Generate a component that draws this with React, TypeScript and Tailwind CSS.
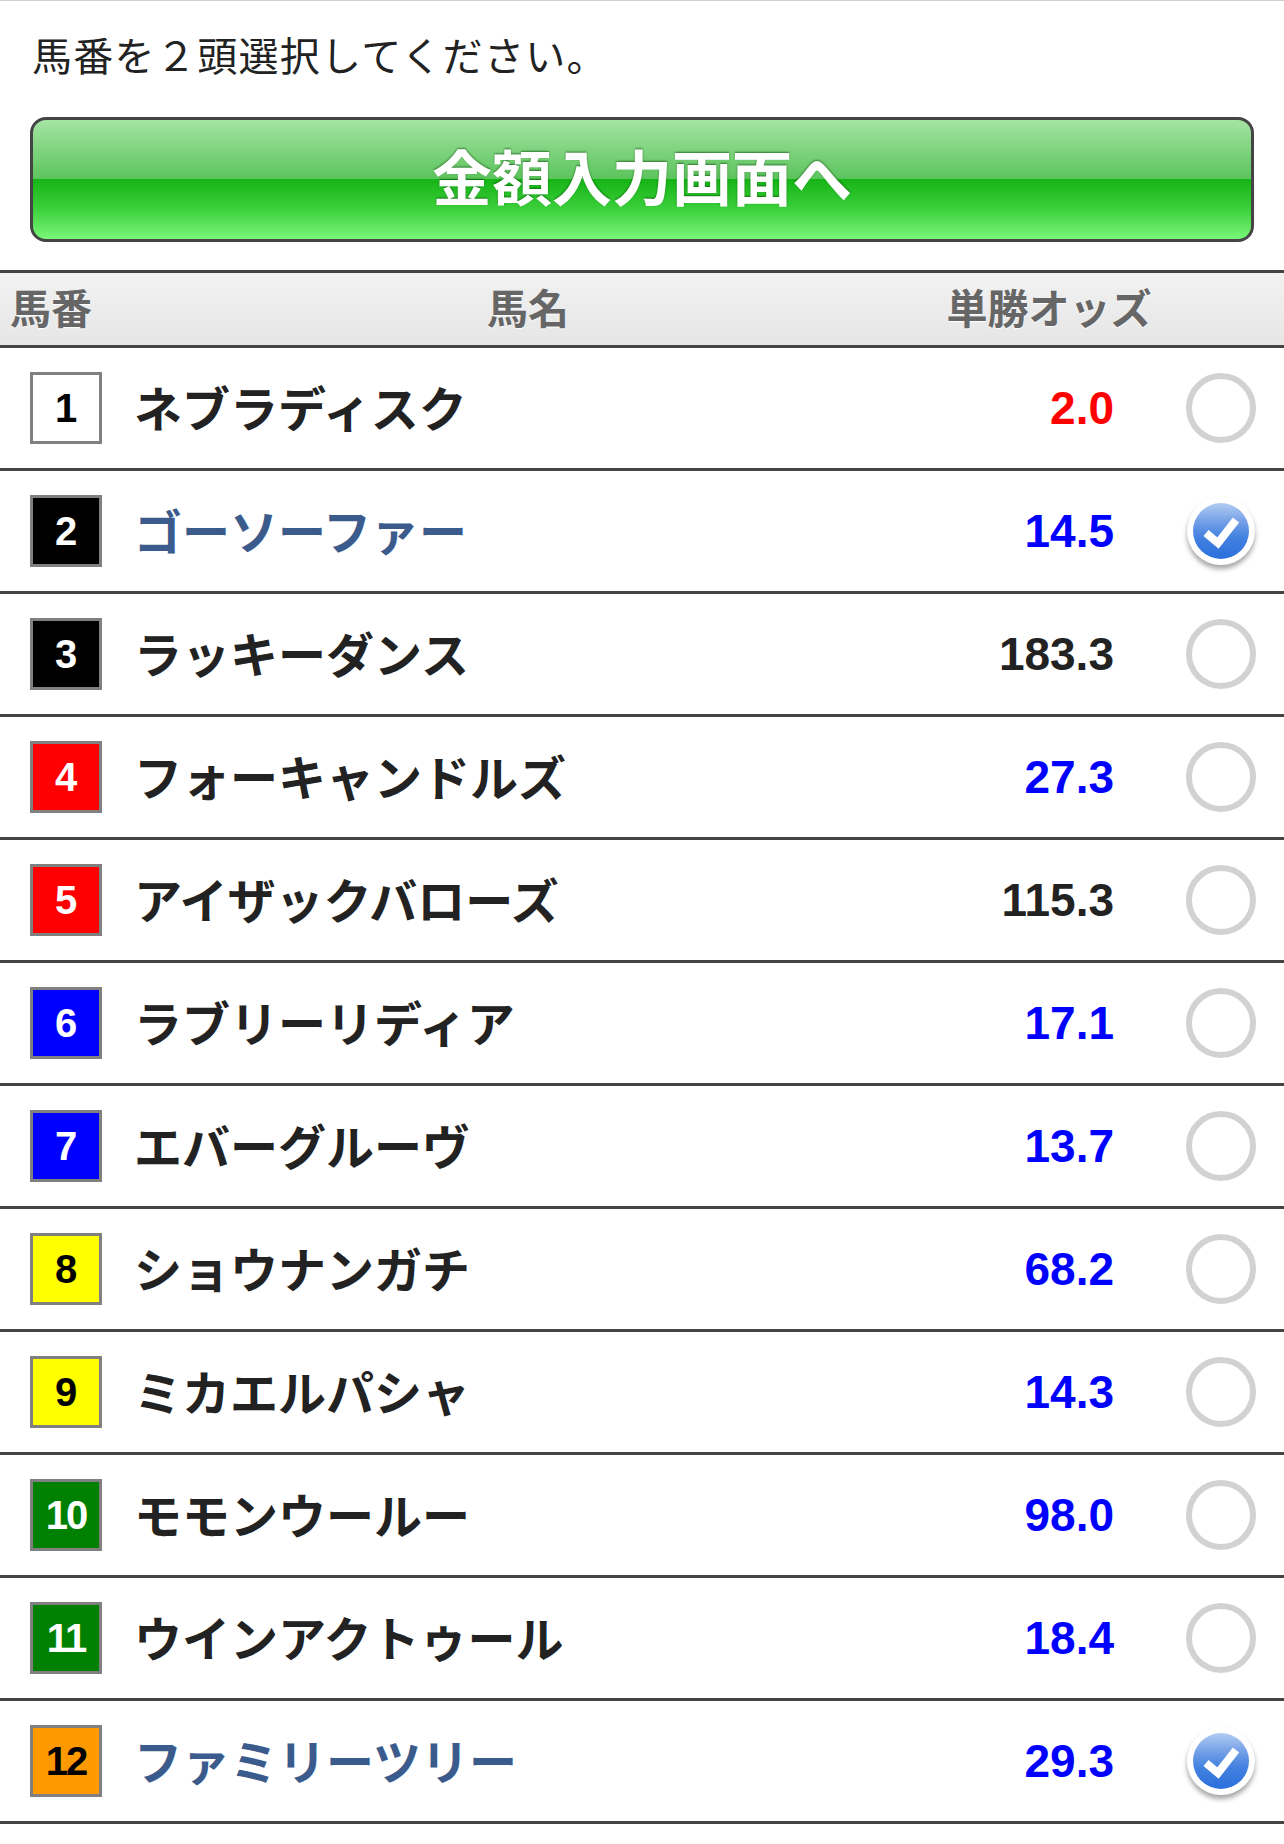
import { FC } from "react";

type Horse = {
  no: number;
  name: string;
  odds: string;
  box: string;
  oddsColor: string;
  selected?: boolean;
};

const horses: Horse[] = [
  { no: 1, name: "ネブラディスク", odds: "2.0", box: "bg-white text-black", oddsColor: "text-[#ff0000]" },
  { no: 2, name: "ゴーソーファー", odds: "14.5", box: "bg-black text-white", oddsColor: "text-[#0000ff]", selected: true },
  { no: 3, name: "ラッキーダンス", odds: "183.3", box: "bg-black text-white", oddsColor: "text-[#222222]" },
  { no: 4, name: "フォーキャンドルズ", odds: "27.3", box: "bg-[#ff0000] text-white", oddsColor: "text-[#0000ff]" },
  { no: 5, name: "アイザックバローズ", odds: "115.3", box: "bg-[#ff0000] text-white", oddsColor: "text-[#222222]" },
  { no: 6, name: "ラブリーリディア", odds: "17.1", box: "bg-[#0000ff] text-white", oddsColor: "text-[#0000ff]" },
  { no: 7, name: "エバーグルーヴ", odds: "13.7", box: "bg-[#0000ff] text-white", oddsColor: "text-[#0000ff]" },
  { no: 8, name: "ショウナンガチ", odds: "68.2", box: "bg-[#ffff00] text-black", oddsColor: "text-[#0000ff]" },
  { no: 9, name: "ミカエルパシャ", odds: "14.3", box: "bg-[#ffff00] text-black", oddsColor: "text-[#0000ff]" },
  { no: 10, name: "モモンウールー", odds: "98.0", box: "bg-[#008000] text-white", oddsColor: "text-[#0000ff]" },
  { no: 11, name: "ウインアクトゥール", odds: "18.4", box: "bg-[#008000] text-white", oddsColor: "text-[#0000ff]" },
  { no: 12, name: "ファミリーツリー", odds: "29.3", box: "bg-[#ff9900] text-black", oddsColor: "text-[#0000ff]", selected: true },
];

const jp = "font-['Noto_Sans_CJK_JP',sans-serif]";
const num = "font-['Liberation_Sans','Noto_Sans_CJK_JP',sans-serif]";

const Radio: FC<{ checked?: boolean }> = ({ checked }) => {
  if (!checked) {
    return <div className="w-[70px] h-[70px] rounded-full border-[6px] border-[#d2d2d2]" />;
  }
  return (
    <div className="w-[68px] h-[68px] rounded-full bg-white flex items-center justify-center shadow-[0_4px_5px_rgba(0,0,0,0.35)]">
      <div className="w-[56px] h-[56px] rounded-full bg-[linear-gradient(to_bottom,#b3cdf2_0%,#7aa4e8_30%,#4582e0_60%,#2a6fdc_100%)] flex items-center justify-center">
        <svg width="56" height="56" viewBox="0 0 56 56">
          <polyline
            points="13,30 25,40 43,17"
            fill="none"
            stroke="white"
            strokeWidth="8"
            strokeLinejoin="miter"
          />
        </svg>
      </div>
    </div>
  );
};

const Row: FC<{ horse: Horse }> = ({ horse }) => {
  return (
    <div className="flex items-center h-[123px] border-b-[3px] border-[#444444] pl-[30px] pr-[28px]">
      <div
        className={`w-[72px] h-[72px] shrink-0 border-[3px] border-[#808080] flex items-center justify-center ${num} font-bold text-[40px] leading-none ${
          horse.no >= 10 ? "tracking-[-2px]" : ""
        } ${horse.box}`}
      >
        {horse.no}
      </div>
      <div
        className={`ml-[32px] pb-[5px] flex-1 ${jp} font-bold text-[48px] leading-none ${
          horse.selected ? "text-[#3b5b8c]" : "text-[#222222]"
        }`}
      >
        {horse.name}
      </div>
      <div className={`${num} font-bold text-[46px] leading-none ${horse.oddsColor}`}>{horse.odds}</div>
      <div className="ml-[72px] w-[70px] flex items-center justify-center">
        <Radio checked={horse.selected} />
      </div>
    </div>
  );
};

export default function App() {
  return (
    <div className="w-[1284px] min-h-[1844px] bg-white border-t border-[#d0d0d0]">
      {/* instruction */}
      <div className={`pt-[33px] pb-[2px] pl-[32px] ${jp} text-[40px] leading-[40px] tracking-[1.3px] text-[#222222]`}>
        馬番を２頭選択してください。
      </div>

      {/* amount button */}
      <div className="mt-[41px] mx-[30px] h-[125px] pb-[10px] rounded-[16px] border-[3px] border-[#444444] bg-[linear-gradient(to_bottom,#a4e4a4_0%,#5cc45c_49.5%,#16b416_50%,#3cd03c_75%,#7af77a_100%)] flex items-center justify-center">
        <span
          className={`${jp} font-bold text-[60px] leading-none text-white [text-shadow:0_-1px_2px_rgba(0,60,0,0.6)]`}
        >
          金額入力画面へ
        </span>
      </div>

      {/* table header */}
      <div
        className={`mt-[28px] h-[78px] pb-[5px] border-y-[3px] border-[#444444] bg-[linear-gradient(to_bottom,#f2f2f2,#e6e6e6)] flex items-center ${jp} font-bold text-[41px] leading-none text-[#666666] [text-shadow:0_1px_1px_#ffffff]`}
      >
        <div className="w-[118px] pl-[10px]">馬番</div>
        <div className="w-[820px] text-center">馬名</div>
        <div className="w-[222px] text-center">単勝オッズ</div>
        <div className="flex-1" />
      </div>

      {/* rows */}
      <div>
        {horses.map((h) => (
          <Row key={h.no} horse={h} />
        ))}
      </div>
    </div>
  );
}
